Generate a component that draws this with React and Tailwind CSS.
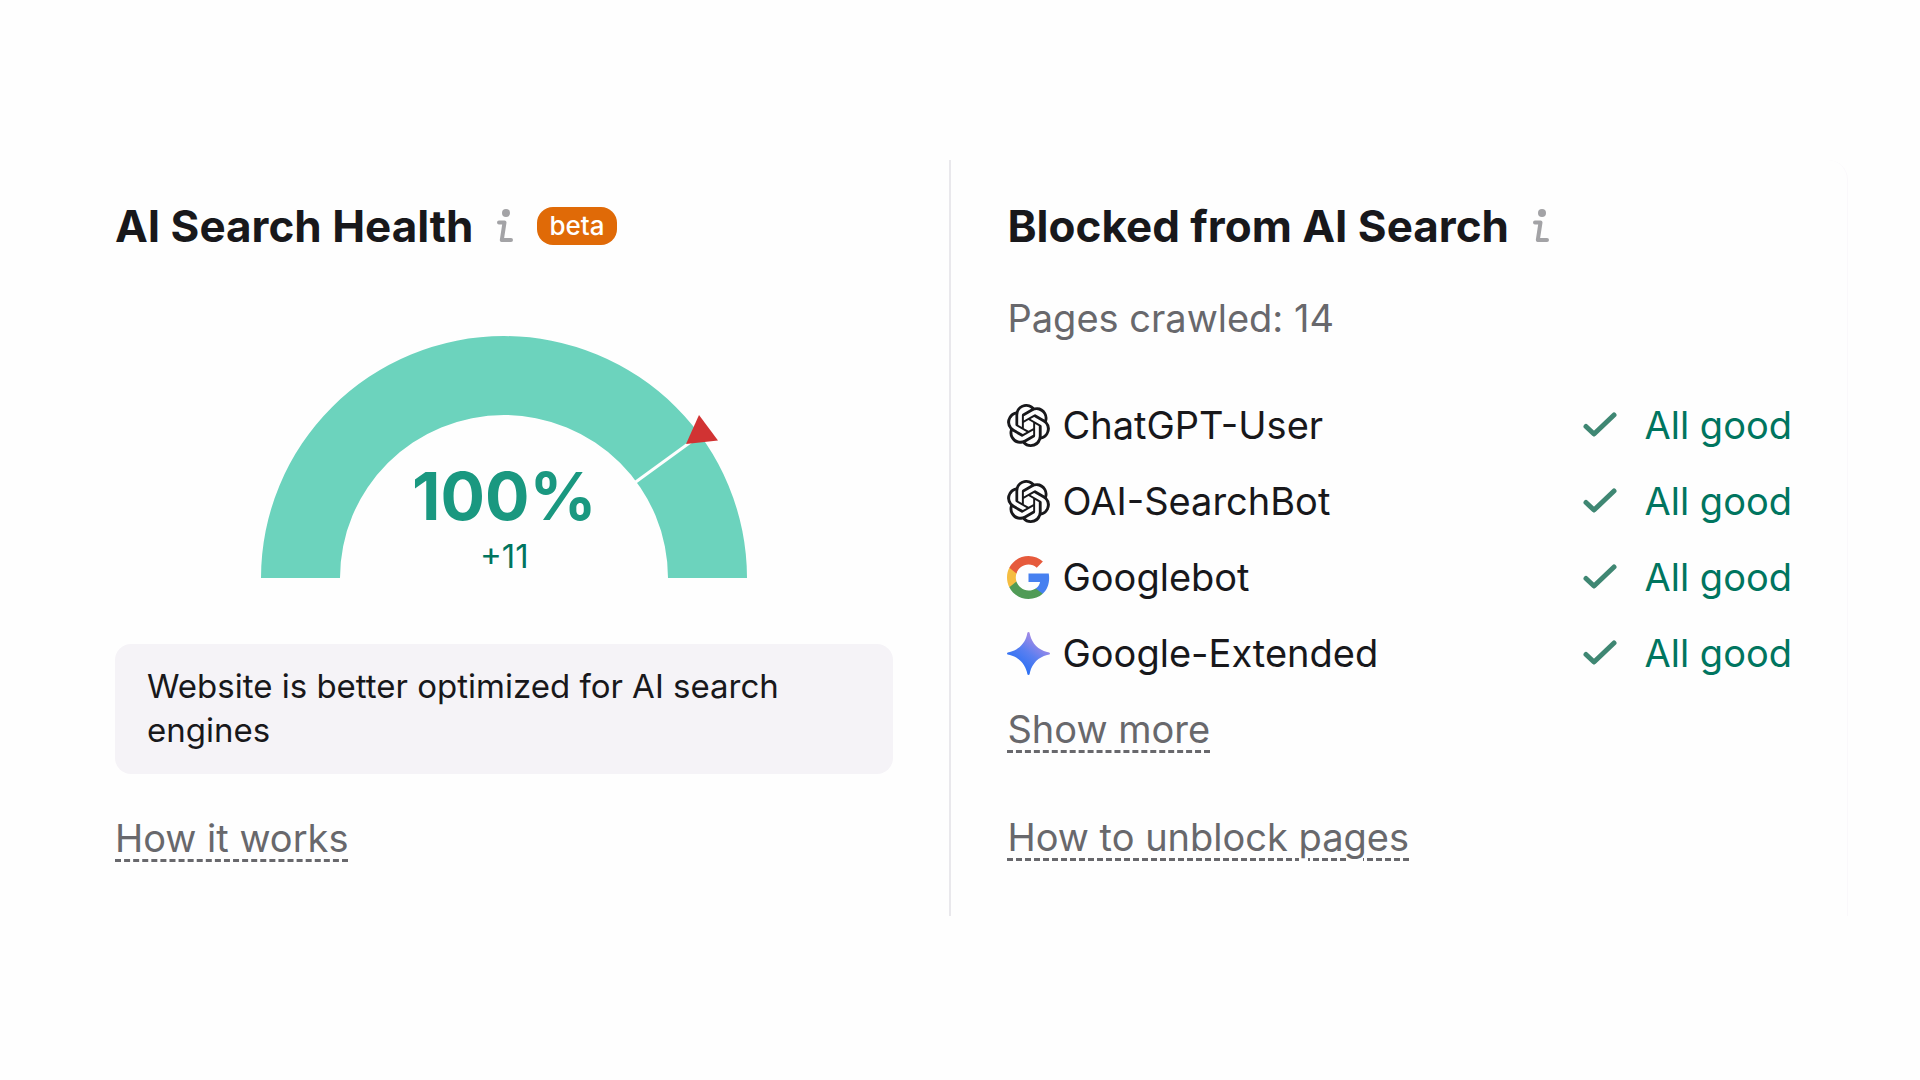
import React from 'react';
import { SiOpenai } from 'react-icons/si';

const InfoIcon = () => (
  <svg viewBox="0 0 16 34" className="h-[34px] w-4" fill="none" aria-hidden="true">
    <circle cx="9" cy="4" r="4" fill="#a3a3a6" />
    <path
      d="M2 13.5H7.5L4.8 31H14"
      stroke="#a3a3a6"
      strokeWidth="4"
      strokeLinecap="round"
      strokeLinejoin="round"
    />
  </svg>
);

const GoogleIcon = () => (
  <svg viewBox="1 1 22 22" className="size-[43px]" aria-hidden="true">
    <path
      fill="#4680f0"
      d="M22.56 12.25c0-.78-.07-1.53-.2-2.25H12v4.26h5.92c-.26 1.37-1.04 2.53-2.21 3.31v2.77h3.57c2.08-1.92 3.28-4.74 3.28-8.09z"
    />
    <path
      fill="#509b56"
      d="M12 23c2.97 0 5.46-.98 7.28-2.66l-3.57-2.77c-.98.66-2.23 1.06-3.71 1.06-2.86 0-5.29-1.93-6.16-4.53H2.18v2.84C3.99 20.53 7.7 23 12 23z"
    />
    <path
      fill="#f5bd41"
      d="M5.84 14.09c-.22-.66-.35-1.36-.35-2.09s.13-1.43.35-2.09V7.07H2.18C1.43 8.55 1 10.22 1 12s.43 3.45 1.18 4.93l3.66-2.84z"
    />
    <path
      fill="#e65a3c"
      d="M12 5.38c1.62 0 3.06.56 4.21 1.64l3.15-3.15C17.45 2.09 14.97 1 12 1 7.7 1 3.99 3.47 2.18 7.07l3.66 2.84c.87-2.6 3.3-4.53 6.16-4.53z"
    />
  </svg>
);

const GeminiIcon = () => (
  <svg viewBox="0 0 44 44" className="size-[43px]" aria-hidden="true">
    <defs>
      <linearGradient id="gemini" x1="14" y1="36" x2="34" y2="10" gradientUnits="userSpaceOnUse">
        <stop offset="0" stopColor="#2f72f4" />
        <stop offset="0.5" stopColor="#5b7ff0" />
        <stop offset="1" stopColor="#a28ae6" />
      </linearGradient>
    </defs>
    <path
      fill="url(#gemini)"
      d="M22 0C23.2 0 23.2 1.2 23.6 3C26 12 32 18 41 20.4C42.8 20.8 44 20.8 44 22C44 23.2 42.8 23.2 41 23.6C32 26 26 32 23.6 41C23.2 42.8 23.2 44 22 44C20.8 44 20.8 42.8 20.4 41C18 32 12 26 3 23.6C1.2 23.2 0 23.2 0 22C0 20.8 1.2 20.8 3 20.4C12 18 18 12 20.4 3C20.8 1.2 20.8 0 22 0Z"
    />
  </svg>
);

const CheckIcon = () => (
  <svg viewBox="0 0 34 26" className="h-[26px] w-[34px]" fill="none" aria-hidden="true">
    <path
      d="M3 14.5L11 22L31 3"
      stroke="#3f8773"
      strokeWidth="5"
      strokeLinecap="round"
      strokeLinejoin="round"
    />
  </svg>
);

const Gauge = () => (
  <svg viewBox="0 0 486 242" className="block w-[486px]" aria-hidden="true">
    <path d="M0 242A243 242 0 0 1 486 242H407A164 163 0 0 0 79 242Z" fill="#6cd3bd" />
    <path d="M374 146.500L442 97" stroke="#fefefe" strokeWidth="3" />
    <path d="M438 79L457 104.500L425 108Z" fill="#d13333" />
  </svg>
);

const bots = [
  { name: 'ChatGPT-User', icon: <SiOpenai className="size-[43px]" /> },
  { name: 'OAI-SearchBot', icon: <SiOpenai className="size-[43px]" /> },
  { name: 'Googlebot', icon: <GoogleIcon /> },
  { name: 'Google-Extended', icon: <GeminiIcon /> },
];

const DashedLink = ({ children }) => (
  <a
    href="#"
    className="text-[38px] leading-[76px] text-[#68686c] underline decoration-dashed decoration-[3px] underline-offset-[7px]"
  >
    {children}
  </a>
);

const App = () => {
  return (
    <main className="min-h-screen bg-[#fefefe] pt-40 pr-[72px] font-['Inter',sans-serif] text-[#18181b]">
      <div className="grid grid-cols-[17fr_16fr] rounded-tr-[20px] border-r border-[#faf8fb]">
        {/* AI Search Health */}
        <section className="flex flex-col items-start border-r-2 border-[#e9e8ec] pt-10 pr-14 pb-10 pl-[115px]">
          <div className="flex items-center">
            <h2 className="text-[44px] leading-[52px] font-bold">AI Search Health</h2>
            <button type="button" aria-label="About AI Search Health" className="ml-6">
              <InfoIcon />
            </button>
            <span className="ml-6 rounded-2xl bg-[#e06a07] px-3 text-[26px] leading-[38px] font-medium text-white">
              beta
            </span>
          </div>

          <div className="relative mt-21 self-center">
            <Gauge />
            <div className="absolute inset-x-0 bottom-0 flex flex-col items-center">
              <span className="text-[66px] leading-[76px] font-bold text-[#1a9880]">100%</span>
              <span className="text-[33px] leading-[44px] text-[#007560]">+11</span>
            </div>
          </div>

          <p className="mt-[66px] w-full rounded-2xl bg-[#f5f3f7] px-8 pt-5 pb-[22px] text-[33px] leading-[44px]">
            Website is better optimized for AI search engines
          </p>

          <div className="mt-[26px]">
            <DashedLink>How it works</DashedLink>
          </div>
        </section>

        {/* Blocked from AI Search */}
        <section className="flex flex-col items-start pt-10 pr-[55px] pb-10 pl-14">
          <div className="flex items-center">
            <h2 className="text-[44px] leading-[52px] font-bold">Blocked from AI Search</h2>
            <button type="button" aria-label="About blocked pages" className="ml-6">
              <InfoIcon />
            </button>
          </div>

          <p className="mt-10 text-[38px] leading-[52px] text-[#68686c]">Pages crawled: 14</p>

          <ul className="mt-[43px] w-full text-[38px] leading-[76px]">
            {bots.map((bot) => (
              <li key={bot.name} className="flex items-center">
                {bot.icon}
                <span className="ml-3">{bot.name}</span>
                <span className="ml-auto flex items-center gap-7 text-[#00755f]">
                  <CheckIcon />
                  All good
                </span>
              </li>
            ))}
          </ul>

          <DashedLink>Show more</DashedLink>
          <div className="mt-8">
            <DashedLink>How to unblock pages</DashedLink>
          </div>
        </section>
      </div>
    </main>
  );
};

export default App;
